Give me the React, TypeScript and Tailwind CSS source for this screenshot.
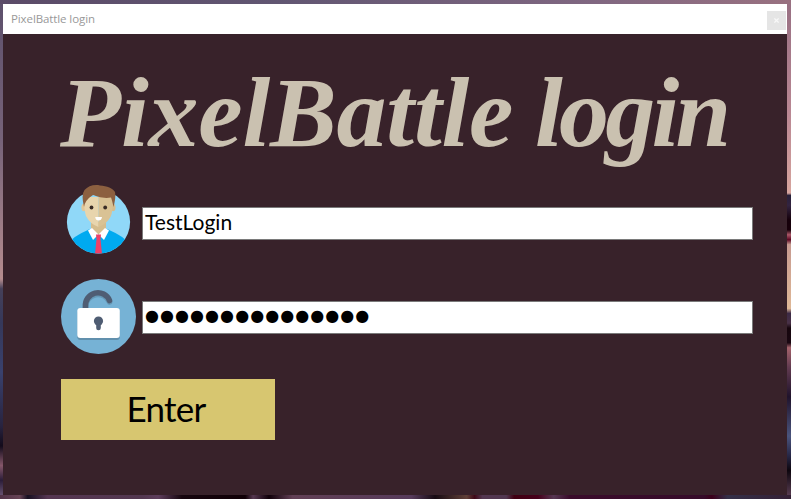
import React from "react";

function UserIcon() {
  return (
    <svg viewBox="55 175 85 85" className="h-[85px] w-[85px] shrink-0" aria-hidden="true">
      <defs>
        <clipPath id="avatar">
          <circle cx="98.5" cy="222" r="31.6" />
        </clipPath>
      </defs>
      <circle cx="98.5" cy="222" r="31.6" fill="#90d8f8" />
      <g clipPath="url(#avatar)">
        <path d="M66 246Q71 237 89 229.500L98.500 226L108 229.500Q126 237 131 246V256H66Z" fill="#00aaf0" />
        <path d="M91 222H106V230L98.500 235L91 230Z" fill="#d5bd8e" />
        <path d="M92 228L98.500 234.500L93 240L88 230.500Z" fill="#fff" />
        <path d="M105 228L98.500 234.500L104 240L109 230.500Z" fill="#fff" />
        <path d="M96 234.500H101L100.500 239L102 254H95L96.500 239Z" fill="#ee4068" />
      </g>
      <ellipse cx="83.700" cy="207.500" rx="2.300" ry="3.800" fill="#e0c79a" />
      <ellipse cx="113.200" cy="207.500" rx="2.300" ry="3.800" fill="#d5bd8e" />
      <path d="M84 197H98.500V227Q90 224 86 216Q84 210 84 197Z" fill="#e8d5ad" />
      <path d="M98.500 197H113Q113 210 111 216Q107 224 98.500 227Z" fill="#d9c294" />
      <path d="M84 207Q81 195 84.500 190C88 186 94 184 100 185.400C107 186 113 188 115 192C116 197 114.500 203 113.500 207Q112 200 111 197.500C103 199 96 196 93 195Q85 200 84 207Z" fill="#8c6040" />
      <circle cx="91.500" cy="207.500" r="1.900" fill="#392b25" />
      <circle cx="105.200" cy="207.500" r="1.900" fill="#392b25" />
      <path d="M95.200 217H102Q101.500 220.500 98.600 220.500Q95.700 220.500 95.200 217Z" fill="#fff" />
    </svg>
  );
}

function LockIcon() {
  return (
    <svg viewBox="0 0 75 75" className="h-[75px] w-[75px] shrink-0" aria-hidden="true">
      <circle cx="37.500" cy="37.500" r="37.500" fill="#76b2d5" />
      <path d="M24.500 32V28A12.500 12.500 0 0 1 48.500 23" fill="none" stroke="#6598b6" strokeWidth="5.600" strokeLinecap="round" />
      <path d="M24.500 30V27.500A12.500 12.500 0 0 1 48.500 21.500" fill="none" stroke="#4f5d73" strokeWidth="5.600" strokeLinecap="round" />
      <rect x="16.300" y="31" width="42.500" height="30" rx="3" fill="#6190ad" />
      <rect x="16.300" y="29" width="42.500" height="30" rx="3" fill="#fff" />
      <circle cx="37.500" cy="42" r="4.600" fill="#4f5d73" />
      <path d="M37.500 43V49" stroke="#4f5d73" strokeWidth="4.600" strokeLinecap="round" />
    </svg>
  );
}

export default function App() {
  return (
    <div className="flex h-[499px] w-[791px] flex-col overflow-hidden">
      <div className="h-1 shrink-0 bg-[linear-gradient(to_right,#5b4b68,#615672_35%,#806781_75%,#997180)]" />
      <div className="flex h-[491px] shrink-0">
        <div className="w-[3px] shrink-0 bg-[linear-gradient(to_bottom,#5d506c_0%,#776379_28%,#b58c8e_56%,#454059_58%,#35385a_65%,#39416d_75%,#28233f_86%,#130b1b_90%,#845669_94%,#2b1d39_97%,#65506e_100%)]" />
        <main className="flex w-[784px] shrink-0 flex-col bg-[#38222a]">
          <header className="flex h-[30px] shrink-0 items-center justify-between bg-white pl-2 pr-px">
            <h2 className="font-['Open_Sans',sans-serif] text-[11.500px] leading-[16px] tracking-[-0.1px] text-[#999]">PixelBattle login</h2>
            <button aria-label="Close" className="mt-[3px] flex h-[19px] w-[19px] items-center justify-center bg-[#e5e5e5]">
              <svg viewBox="0 0 6 6" className="h-[5px] w-[5px]" aria-hidden="true"><path d="M.5 .5L5.500 5.500M5.500 .5L.5 5.500" stroke="#f8f8f8" strokeWidth="1.500" /></svg>
            </button>
          </header>
          <h1 className="ml-[57px] mt-[23px] h-[118px] whitespace-nowrap font-['Liberation_Serif',serif] text-[100px] font-bold italic leading-[112px] tracking-[-0.200px] text-[#cac1b0] [word-spacing:-3px]">PixelBattle <span className="tracking-[-3.800px]">login</span></h1>
          <div className="ml-[52px] flex h-[85px] shrink-0 items-start">
            <UserIcon />
            <div className="ml-[2px] mt-8 flex h-[33px] w-[611px] items-center border border-[#7a7a7a] bg-white pb-[3px] pl-[2px] font-['Lato',sans-serif] text-[21px] leading-[28px] text-black">TestLogin</div>
          </div>
          <div className="ml-[58px] mt-[19px] flex h-[75px] shrink-0 items-start">
            <LockIcon />
            <div className="ml-[6px] mt-[22px] flex h-[33px] w-[611px] items-center border border-[#7a7a7a] bg-white pb-[3px] pl-[2px] font-['DejaVu_Sans',sans-serif] text-[16px] leading-[28px] tracking-[1.060px] text-black">●●●●●●●●●●●●●●●</div>
          </div>
          <button className="ml-[58px] mt-[25px] flex h-[61px] w-[214px] items-center justify-center bg-[#d7c670] pb-[4px] pr-[4px] font-['Lato',sans-serif] text-[35px] leading-[50px] tracking-[-0.7px] text-black">Enter</button>
        </main>
        <div className="w-1 shrink-0 bg-[linear-gradient(to_bottom,#987083_0%,#b98793_22%,#d7a59e_38.500%,#282039_39%,#332440_41%,#15000a_44%,#18000a_46%,#ac5868_47%,#5d0823_48%,#c79b91_49%,#dfb897_62%,#3c2a46_63%,#493147_65%,#16060d_66%,#190711_69%,#a4626b_70%,#623b50_74%,#20132c_80%,#4a547d_88%,#272746_92%,#0d060e_95%,#573b50_100%)]" />
      </div>
      <div className="h-1 shrink-0 bg-[linear-gradient(to_right,#513348_0%,#674455_2.500%,#171021_3.500%,#553651_6%,#533850_18%,#5e3e5c_20%,#16060e_23%,#100006_31%,#563850_32%,#100009_34%,#624055_37%,#573b5b_52%,#170b13_55%,#604038_59%,#3e0918_60%,#533750_61%,#513750_64%,#400012_65%,#46001b_68%,#563752_70%,#3a0c2b_72%,#360c2a_89%,#3b001b_90%,#343048_92%,#352035_100%)]" />
    </div>
  );
}
